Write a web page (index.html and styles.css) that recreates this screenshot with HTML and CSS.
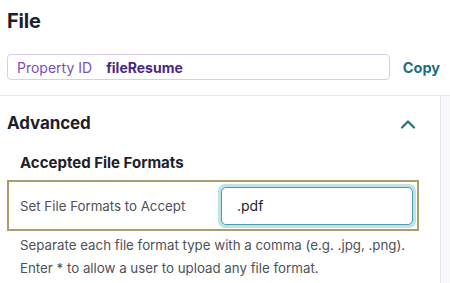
FILE: index.html
```html
<!DOCTYPE html>
<html lang="en">
<head>
    <meta charset="UTF-8">
    <meta name="viewport" content="width=device-width, initial-scale=1.0">
    <title>File</title>
    <link rel="stylesheet" href="styles.css">
</head>
<body>
    <div class="top">
        <h1>File</h1>
        <div class="property-row">
            <div class="property-box">
                <span class="property-label">Property ID</span>
                <span class="property-value">fileResume</span>
            </div>
            <button class="copy-btn">Copy</button>
        </div>
    </div>

    <div class="panel-wrap">
        <div class="panel">
            <div class="section-head">
                <h2>Advanced</h2>
                <svg class="chevron" width="16" height="10" viewBox="0 0 16 10">
                    <path d="M2 8.5 L8 2.5 L14 8.5" fill="none" stroke="#1f6f80" stroke-width="2.2" stroke-linecap="round" stroke-linejoin="round"/>
                </svg>
            </div>
            <h3>Accepted File Formats</h3>
            <div class="field-box">
                <label class="field-label" for="formats">Set File Formats to Accept</label>
                <div class="input-ring">
                    <input class="field-input" id="formats" type="text" value=".pdf">
                </div>
            </div>
            <p class="help">Separate each file format type with a comma (e.g. .jpg, .png).<br>Enter * to allow a user to upload any file format.</p>
        </div>
        <div class="side"></div>
    </div>
</body>
</html>
```

FILE: styles.css
```css
:root {
    --text: #1d1f2a;
    --muted: #4f5159;
    --purple: #7b4fb5;
    --purple-dark: #4b2680;
    --purple-line: #dccbf1;
    --teal: #1f6f80;
    --teal-ring: #bfe3e8;
    --teal-line: #4f9aa6;
    --gold: #ab9d6c;
    --line: #e6e6ec;
}

* {
    margin: 0;
    padding: 0;
    box-sizing: border-box;
}

body {
    font-family: 'Inter', 'Liberation Sans', sans-serif;
    background: white;
    color: var(--text);
    width: 450px;
    height: 283px;
    overflow: hidden;
}

.top {
    padding: 9px 10px 0 7px;
    height: 96px;
    border-bottom: 1px solid var(--line);
}

h1 {
    font-size: 20px;
    font-weight: 700;
    line-height: 24px;
    letter-spacing: -0.2px;
}

.property-row {
    display: flex;
    align-items: center;
    margin-top: 21px;
}

.property-box {
    width: 383px;
    height: 26px;
    border: 1px solid var(--purple-line);
    border-radius: 4px;
    display: flex;
    align-items: center;
    padding-left: 9px;
    font-size: 14px;
}

.property-label {
    color: var(--purple);
    margin-right: 14px;
}

.property-value {
    color: var(--purple-dark);
    font-weight: 700;
}

.copy-btn {
    margin-left: auto;
    background: none;
    border: none;
    font-family: inherit;
    font-size: 14.5px;
    font-weight: 700;
    color: var(--teal);
}

.panel-wrap {
    display: flex;
    height: 187px;
}

.panel {
    width: 441px;
    border-right: 1px solid var(--line);
    padding: 0 21px 0 7px;
}

.side {
    flex: 1;
    background: #f9f9fb;
}

.section-head {
    display: flex;
    align-items: center;
    justify-content: space-between;
    height: 54px;
    padding-right: 3px;
}

h2 {
    font-size: 17px;
    font-weight: 700;
    letter-spacing: -0.1px;
}

.chevron {
    margin-top: 2px;
}

h3 {
    font-size: 15px;
    font-weight: 700;
    padding-left: 13px;
    line-height: 22px;
    margin-top: 2px;
    margin-bottom: 6px;
}

.field-box {
    display: flex;
    align-items: center;
    justify-content: space-between;
    height: 51px;
    border: 2px solid var(--gold);
    padding: 0 1px 0 11px;
}

.field-label {
    font-size: 13.3px;
    color: var(--muted);
}

.input-ring {
    padding: 3px;
    border-radius: 7px;
    background: var(--teal-ring);
}

.field-input {
    display: block;
    width: 192px;
    height: 38px;
    border: 1.5px solid var(--teal-line);
    border-radius: 5px;
    padding-left: 15px;
    font-family: inherit;
    font-size: 14px;
    color: var(--text);
    background: white;
    outline: none;
}

.help {
    font-size: 13.3px;
    line-height: 23px;
    color: var(--muted);
    padding-left: 13px;
    margin-top: 3px;
    white-space: nowrap;
}
```
